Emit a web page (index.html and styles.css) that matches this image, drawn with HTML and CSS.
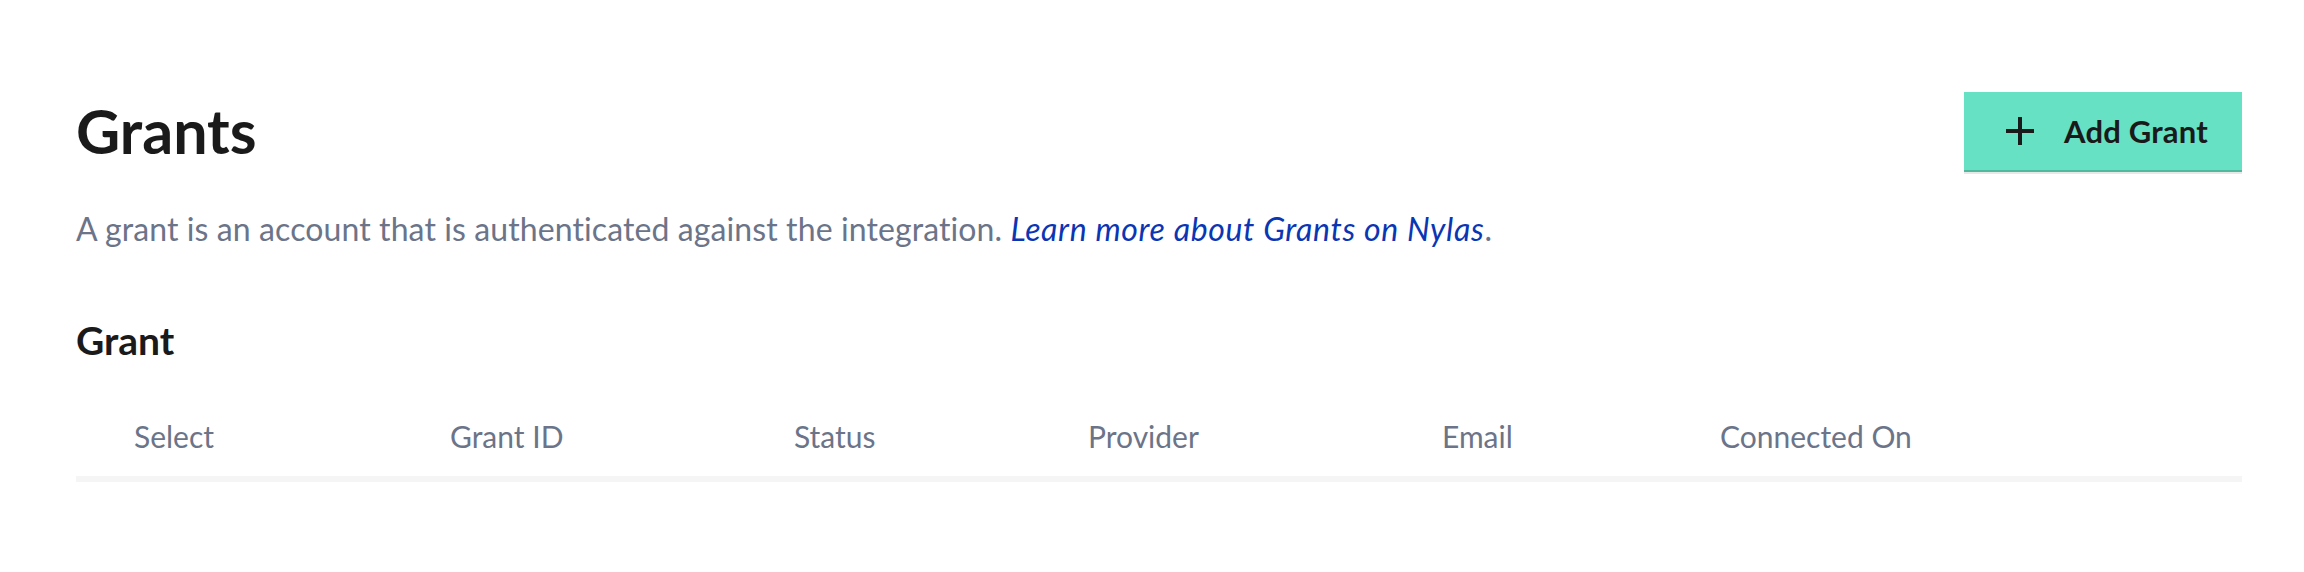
FILE: index.html
```html
<!DOCTYPE html>
<html lang="en">
<head>
<meta charset="utf-8">
<title>Grants</title>
<link rel="stylesheet" href="styles.css">
</head>
<body>
<main class="page">
  <header class="page-head">
    <h1 class="title">Grants</h1>
    <button class="add-btn" type="button">
      <svg class="plus" width="28" height="28" viewBox="0 0 28 28" aria-hidden="true">
        <rect x="12" y="0" width="4" height="28" fill="currentColor"/>
        <rect x="0" y="12" width="28" height="4" fill="currentColor"/>
      </svg>
      <span>Add Grant</span>
    </button>
  </header>
  <p class="desc">A grant is an account that is authenticated against the integration. <a class="link" href="#">Learn more about Grants on Nylas</a>.</p>
  <h2 class="section-title">Grant</h2>
  <div class="table">
    <div class="thead">
      <div class="th">Select</div>
      <div class="th">Grant ID</div>
      <div class="th">Status</div>
      <div class="th">Provider</div>
      <div class="th">Email</div>
      <div class="th">Connected On</div>
    </div>
  </div>
</main>
</body>
</html>
```

FILE: styles.css
```css
html, body {
  margin: 0;
  padding: 0;
  background: #ffffff;
}

body {
  font-family: "Lato", "Liberation Sans", sans-serif;
  color: #1a1a1a;
}

.page {
  padding: 92px 62px 0 76px;
}

.page-head {
  display: flex;
  justify-content: space-between;
  align-items: flex-start;
  height: 80px;
}

.title {
  margin: 2px 0 0 0;
  font-size: 61px;
  line-height: 74px;
  font-weight: 700;
  color: #1a1a1a;
}

.add-btn {
  display: flex;
  align-items: center;
  gap: 30px;
  width: 278px;
  height: 80px;
  padding: 0 0 0 42px;
  border: 0;
  border-bottom: 2px solid #52b89e;
  box-shadow: 0 2px 0 #e8e8e8;
  background: #67e1c4;
  color: #1a1a1a;
  font-family: "Lato", "Liberation Sans", sans-serif;
  font-size: 31px;
  font-weight: 700;
  letter-spacing: 0.2px;
  box-sizing: border-box;
  cursor: pointer;
}

.plus {
  display: block;
  flex: none;
}

.desc {
  margin: 37px 0 0 0;
  font-size: 32px;
  line-height: 40px;
  letter-spacing: 0.1px;
  color: #6b7489;
}

.link {
  color: #0a36b4;
  font-style: italic;
  letter-spacing: 0.65px;
  text-decoration: none;
}

.section-title {
  margin: 68px 0 0 0;
  font-size: 39px;
  line-height: 46px;
  font-weight: 700;
  color: #1a1a1a;
}

.table {
  margin-top: 53px;
}

.thead {
  display: grid;
  grid-template-columns: 316px 344px 294px 354px 278px 1fr;
  border-bottom: 6px solid #f5f5f5;
}

.th {
  padding: 0 0 20px 58px;
  font-size: 30px;
  line-height: 40px;
  color: #6b7489;
}
```
